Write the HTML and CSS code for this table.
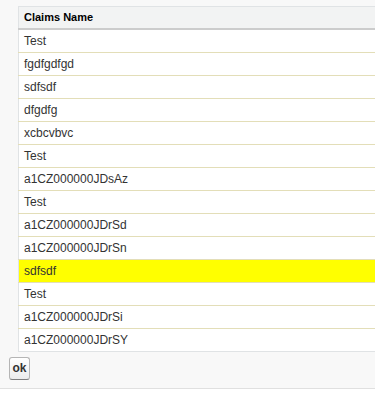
FILE: index.html
```html
<!DOCTYPE html>
<html>
<head>
<meta charset="utf-8">
<link rel="stylesheet" href="styles.css">
</head>
<body>
<div class="panel">
  <div class="body">
    <table class="list">
      <thead>
        <tr class="header-row"><th>Claims Name</th></tr>
      </thead>
      <tbody>
        <tr class="data-row"><td>Test</td></tr>
        <tr class="data-row"><td>fgdfgdfgd</td></tr>
        <tr class="data-row"><td>sdfsdf</td></tr>
        <tr class="data-row"><td>dfgdfg</td></tr>
        <tr class="data-row"><td>xcbcvbvc</td></tr>
        <tr class="data-row"><td>Test</td></tr>
        <tr class="data-row"><td>a1CZ000000JDsAz</td></tr>
        <tr class="data-row"><td>Test</td></tr>
        <tr class="data-row"><td>a1CZ000000JDrSd</td></tr>
        <tr class="data-row"><td>a1CZ000000JDrSn</td></tr>
        <tr class="data-row highlight"><td>sdfsdf</td></tr>
        <tr class="data-row"><td>Test</td></tr>
        <tr class="data-row"><td>a1CZ000000JDrSi</td></tr>
        <tr class="data-row last"><td>a1CZ000000JDrSY</td></tr>
      </tbody>
    </table>
  </div>
  <div class="footer">
    <button class="btn" type="button">ok</button>
  </div>
</div>
</body>
</html>
```

FILE: styles.css
```css
html, body {
  margin: 0;
  padding: 0;
  background: #ffffff;
  font-family: "Liberation Sans", Arial, Helvetica, sans-serif;
}

.panel {
  width: 375px;
  background: #f8f8f8;
  border-bottom: 1px solid #e0e0e0;
}

.body {
  padding: 6px 0 0 18px;
}

.list {
  width: 100%;
  border-collapse: collapse;
  border: 1px solid #e0e3e5;
  border-right: none;
  background: #ffffff;
}

.header-row th {
  background: #f2f3f3;
  border-bottom: 2px solid #cccccc;
  color: #000000;
  font-size: 11px;
  font-weight: bold;
  text-align: left;
  height: 22px;
  padding: 0 5px;
  box-sizing: border-box;
  vertical-align: middle;
}

.data-row td {
  height: 22px;
  padding: 0 5px;
  font-size: 12px;
  color: #333333;
  border-bottom: 1px solid #e3deb8;
  vertical-align: middle;
}

.data-row.last td {
  border-bottom: 1px solid #e0e3e5;
}

.data-row.highlight td {
  background: #ffff00;
}

.footer {
  height: 36px;
  padding: 5px 0 0 9px;
  box-sizing: border-box;
}

.btn {
  width: 21px;
  height: 23px;
  padding: 0;
  margin: 0;
  font-family: "Liberation Sans", Arial, Helvetica, sans-serif;
  font-size: 12px;
  font-weight: bold;
  color: #333333;
  border: 1px solid #b5b5b5;
  border-bottom-color: #7f7f7f;
  border-radius: 3px;
  background: linear-gradient(#ffffff, #ececec);
  display: block;
}
```
